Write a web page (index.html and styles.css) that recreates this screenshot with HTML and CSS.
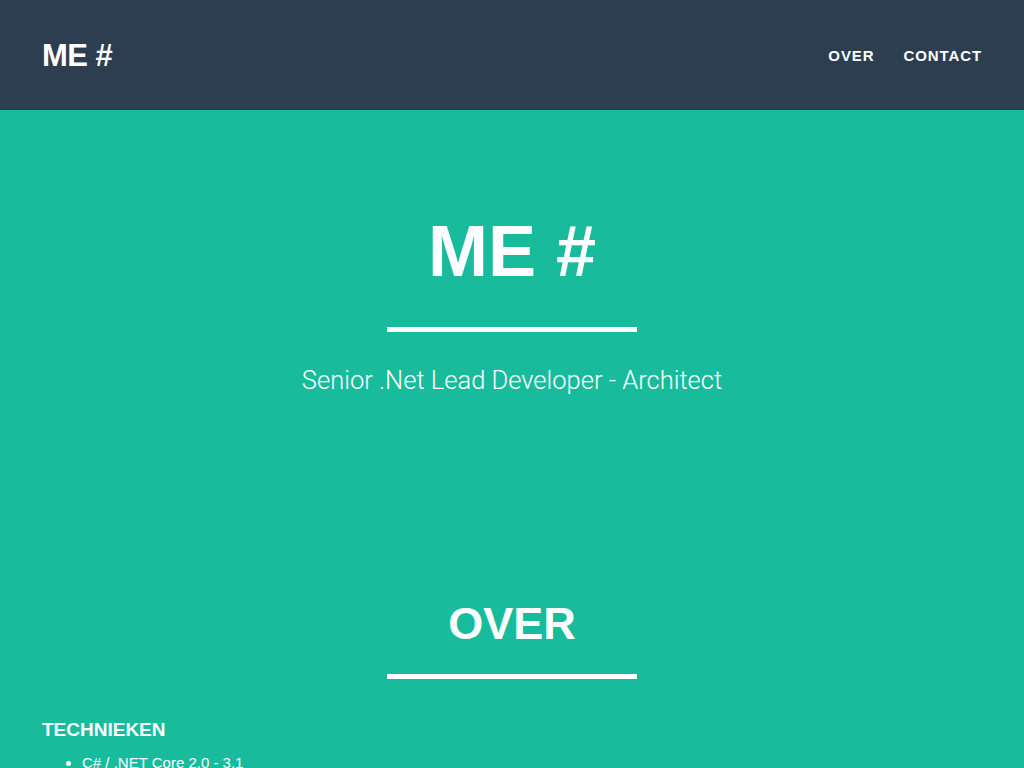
FILE: index.html
```html
<!DOCTYPE html>
<html lang="nl">
<head>
<meta charset="utf-8">
<title>ME #</title>
<link rel="stylesheet" href="styles.css">
</head>
<body>
<nav class="navbar">
  <div class="container nav-inner">
    <a class="brand" href="#">ME #</a>
    <ul class="nav-links">
      <li><a href="#over">Over</a></li>
      <li><a href="#contact">Contact</a></li>
    </ul>
  </div>
</nav>
<header class="hero">
  <div class="container center">
    <h1 class="hero-title">ME #</h1>
    <hr class="divider">
    <p class="hero-sub">Senior .Net Lead Developer - Architect</p>
  </div>
</header>
<section class="about" id="over">
  <div class="container">
    <h2 class="section-title">Over</h2>
    <hr class="divider divider-section">
    <h3 class="sub-title">TECHNIEKEN</h3>
    <ul class="tech-list">
      <li>C# / .NET Core 2.0 - 3.1</li>
      <li>ASP.NET MVC</li>
    </ul>
  </div>
</section>
</body>
</html>
```

FILE: styles.css
```css
* { box-sizing: border-box; }
html, body {
  margin: 0;
  padding: 0;
}
body {
  background: #18bc9c;
  color: #fff;
  font-family: "Liberation Sans", Arial, sans-serif;
  font-size: 15px;
  line-height: 1.42;
}
.container {
  width: 970px;
  margin: 0 auto;
  padding: 0 15px;
}
.navbar {
  background: #2c3e50;
  height: 110px;
}
.nav-inner {
  height: 110px;
  display: flex;
  align-items: center;
  justify-content: space-between;
}
.brand {
  color: #fff;
  text-decoration: none;
  font-weight: 700;
  font-size: 31px;
  letter-spacing: -0.5px;
  line-height: 1;
  margin-top: 1px;
}
.nav-links {
  list-style: none;
  margin: 0;
  padding: 0;
  display: flex;
  gap: 29px;
  margin-top: 2px;
}
.nav-links a {
  color: #fff;
  text-decoration: none;
  text-transform: uppercase;
  font-weight: 700;
  font-size: 15px;
  letter-spacing: 0.9px;
}
.hero {
  padding-top: 102px;
}
.center { text-align: center; }
.hero-title {
  margin: 0;
  font-size: 72px;
  line-height: 1.1;
  font-weight: 700;
}
.divider {
  width: 250px;
  height: 5px;
  border: 0;
  background: #fff;
  margin: 36px auto 0;
}
.hero-sub {
  margin: 33px 0 0;
  font-family: "Roboto", "Liberation Sans", sans-serif;
  font-weight: 300;
  font-size: 25.5px;
  line-height: 1.2;
}
.about {
  padding-top: 203px;
}
.section-title {
  margin: 0;
  text-align: center;
  text-transform: uppercase;
  font-size: 45px;
  line-height: 1.1;
  font-weight: 700;
}
.divider-section {
  margin-top: 26px;
}
.sub-title {
  margin: 41px 0 0;
  font-size: 19px;
  line-height: 1.1;
  font-weight: 700;
}
.tech-list {
  margin: 11px 0 0;
  padding-left: 40px;
}
.tech-list li {
  font-size: 15px;
}
```
